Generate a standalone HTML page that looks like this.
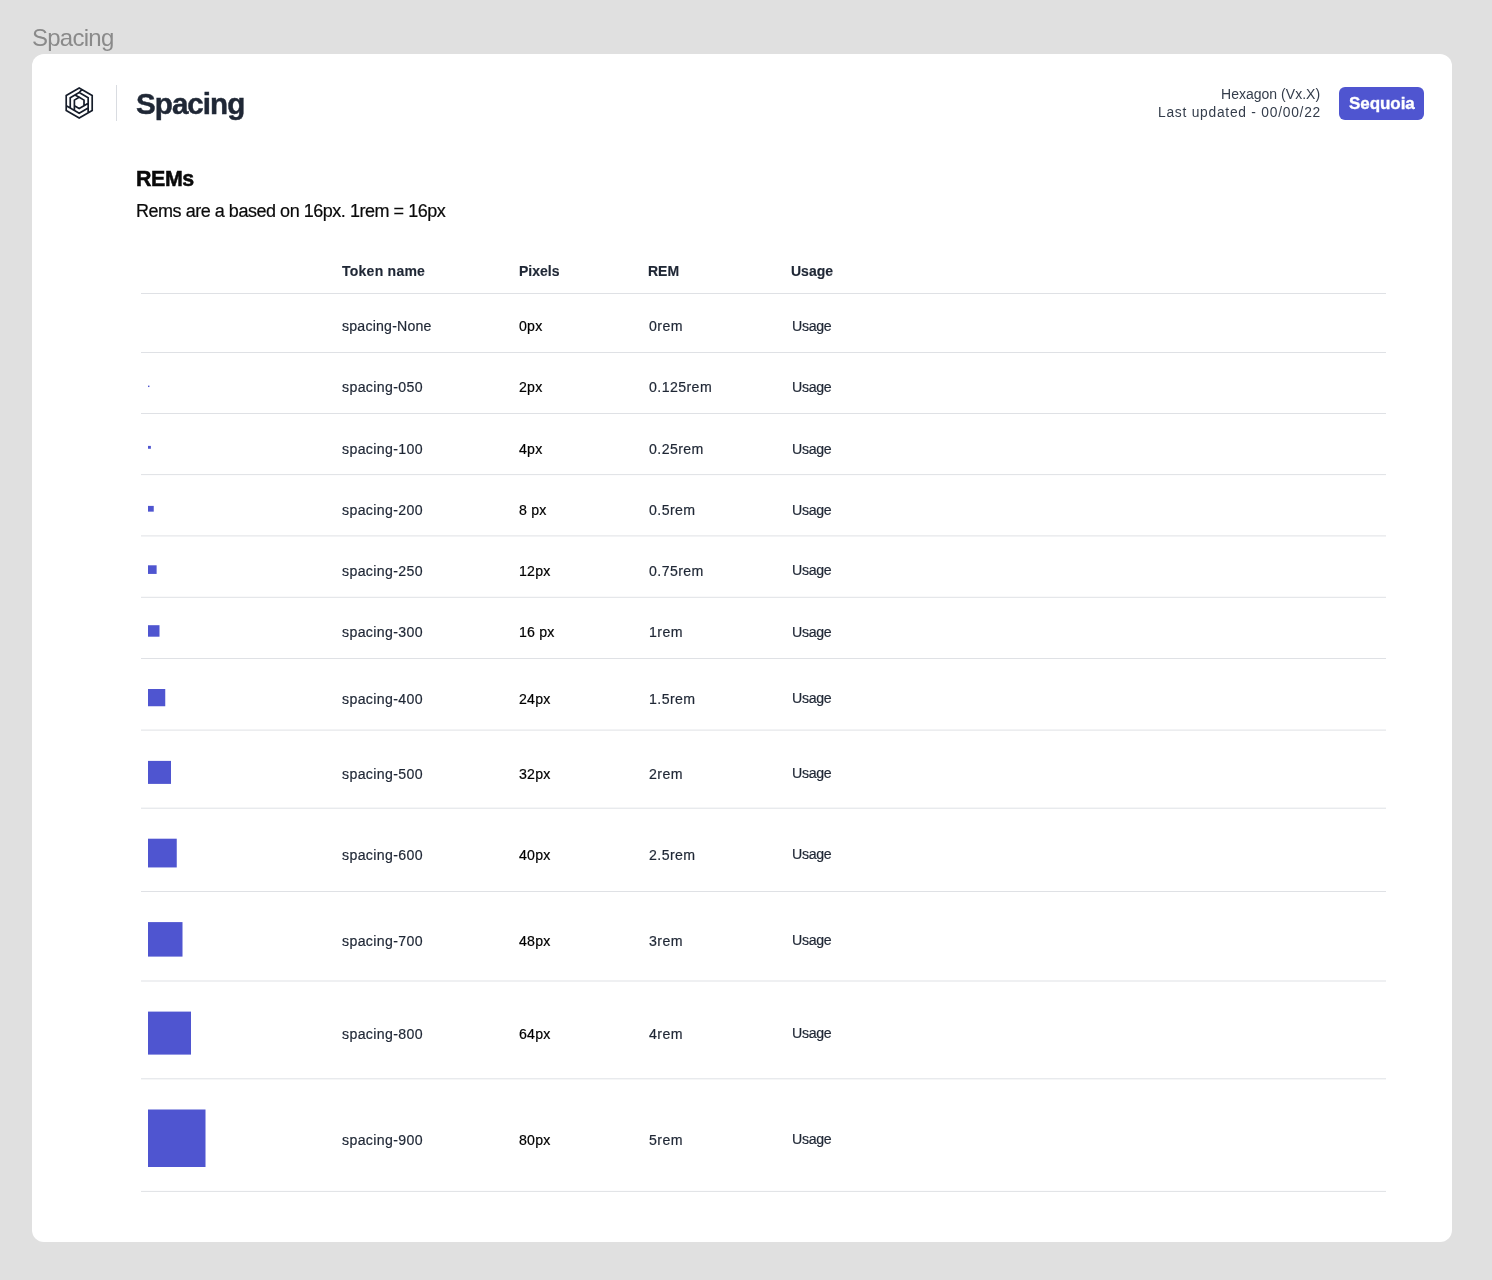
<!DOCTYPE html>
<html><head><meta charset="utf-8"><title>Spacing</title>
<style>
html,body{margin:0;padding:0;}
body{width:1492px;height:1280px;background:#e0e0e0;position:relative;overflow:hidden;font-family:"Liberation Sans",sans-serif;}
.t{position:absolute;white-space:nowrap;will-change:transform;}
.r{-webkit-text-stroke:0.2px currentColor;}
.card{position:absolute;left:32px;top:54px;width:1420px;height:1188px;background:#fff;border-radius:12px;}
svg{position:absolute;left:0;top:0;}
</style></head><body>
<div class="t " style="left:32.00px;top:25.98px;font-size:24px;line-height:24px;color:#8a8a8a;letter-spacing:-0.75px;">Spacing</div>
<div class="card"></div>
<div class="t " style="left:135.80px;top:88.74px;font-size:29.6px;line-height:29.6px;color:#1f2735;letter-spacing:-0.97px;font-weight:700;-webkit-text-stroke:0.45px #1f2735;">Spacing</div>
<div class="t " style="right:172.00px;top:86.55px;font-size:14px;line-height:14px;color:#343d4b;letter-spacing:0.02px;">Hexagon (Vx.X)</div>
<div class="t " style="right:171.50px;top:105.92px;font-size:13.8px;line-height:13.8px;color:#343d4b;letter-spacing:0.75px;">Last updated - 00/00/22</div>
<div style="position:absolute;left:1339.3px;top:86.5px;width:84.5px;height:33.2px;border-radius:6px;background:#4f55d0"></div>
<div class="t " style="left:1349.00px;top:95.21px;font-size:17px;line-height:17px;color:#ffffff;letter-spacing:-0.05px;font-weight:700;-webkit-text-stroke:0.35px #ffffff;">Sequoia</div>
<div class="t " style="left:136.00px;top:169.08px;font-size:21.4px;line-height:21.4px;color:#0a0a0a;letter-spacing:-0.4px;font-weight:700;-webkit-text-stroke:0.5px #0a0a0a;">REMs</div>
<div class="t r" style="left:135.50px;top:201.66px;font-size:18px;line-height:18px;color:#0a0a0a;letter-spacing:-0.47px;">Rems are a based on 16px. 1rem = 16px</div>
<div class="t " style="left:342.00px;top:263.65px;font-size:14px;line-height:14px;color:#1f2735;letter-spacing:0.25px;font-weight:700;-webkit-text-stroke:0.15px #1f2735;">Token name</div>
<div class="t " style="left:518.50px;top:263.65px;font-size:14px;line-height:14px;color:#1f2735;letter-spacing:0px;font-weight:700;-webkit-text-stroke:0.15px #1f2735;">Pixels</div>
<div class="t " style="left:647.70px;top:263.65px;font-size:14px;line-height:14px;color:#1f2735;letter-spacing:0px;font-weight:700;-webkit-text-stroke:0.15px #1f2735;">REM</div>
<div class="t " style="left:790.70px;top:263.65px;font-size:14px;line-height:14px;color:#1f2735;letter-spacing:0px;font-weight:700;-webkit-text-stroke:0.15px #1f2735;">Usage</div>
<div class="t r" style="left:342.30px;top:318.72px;font-size:14.15px;line-height:14.15px;color:#1f2735;letter-spacing:0.2px;">spacing-None</div>
<div class="t r" style="left:518.80px;top:318.72px;font-size:14.15px;line-height:14.15px;color:#000000;letter-spacing:0.2px;">0px</div>
<div class="t r" style="left:648.50px;top:318.72px;font-size:14.15px;line-height:14.15px;color:#1f2735;letter-spacing:0.42px;">0rem</div>
<div class="t r" style="left:792.30px;top:318.72px;font-size:14.15px;line-height:14.15px;color:#1f2735;letter-spacing:-0.3px;">Usage</div>
<div class="t r" style="left:342.00px;top:380.32px;font-size:14.15px;line-height:14.15px;color:#1f2735;letter-spacing:0.35px;">spacing-050</div>
<div class="t r" style="left:518.80px;top:380.32px;font-size:14.15px;line-height:14.15px;color:#000000;letter-spacing:0.2px;">2px</div>
<div class="t r" style="left:648.50px;top:380.32px;font-size:14.15px;line-height:14.15px;color:#1f2735;letter-spacing:0.42px;">0.125rem</div>
<div class="t r" style="left:792.30px;top:380.32px;font-size:14.15px;line-height:14.15px;color:#1f2735;letter-spacing:-0.3px;">Usage</div>
<div class="t r" style="left:342.00px;top:441.52px;font-size:14.15px;line-height:14.15px;color:#1f2735;letter-spacing:0.35px;">spacing-100</div>
<div class="t r" style="left:518.80px;top:441.52px;font-size:14.15px;line-height:14.15px;color:#000000;letter-spacing:0.2px;">4px</div>
<div class="t r" style="left:648.50px;top:441.52px;font-size:14.15px;line-height:14.15px;color:#1f2735;letter-spacing:0.42px;">0.25rem</div>
<div class="t r" style="left:792.30px;top:441.52px;font-size:14.15px;line-height:14.15px;color:#1f2735;letter-spacing:-0.3px;">Usage</div>
<div class="t r" style="left:342.00px;top:502.52px;font-size:14.15px;line-height:14.15px;color:#1f2735;letter-spacing:0.35px;">spacing-200</div>
<div class="t r" style="left:518.80px;top:502.52px;font-size:14.15px;line-height:14.15px;color:#000000;letter-spacing:0.2px;">8 px</div>
<div class="t r" style="left:648.50px;top:502.52px;font-size:14.15px;line-height:14.15px;color:#1f2735;letter-spacing:0.42px;">0.5rem</div>
<div class="t r" style="left:792.30px;top:502.52px;font-size:14.15px;line-height:14.15px;color:#1f2735;letter-spacing:-0.3px;">Usage</div>
<div class="t r" style="left:342.00px;top:563.52px;font-size:14.15px;line-height:14.15px;color:#1f2735;letter-spacing:0.35px;">spacing-250</div>
<div class="t r" style="left:518.80px;top:563.52px;font-size:14.15px;line-height:14.15px;color:#000000;letter-spacing:0.2px;">12px</div>
<div class="t r" style="left:648.50px;top:563.52px;font-size:14.15px;line-height:14.15px;color:#1f2735;letter-spacing:0.42px;">0.75rem</div>
<div class="t r" style="left:792.30px;top:562.82px;font-size:14.15px;line-height:14.15px;color:#1f2735;letter-spacing:-0.3px;">Usage</div>
<div class="t r" style="left:342.00px;top:624.77px;font-size:14.15px;line-height:14.15px;color:#1f2735;letter-spacing:0.35px;">spacing-300</div>
<div class="t r" style="left:518.80px;top:624.77px;font-size:14.15px;line-height:14.15px;color:#000000;letter-spacing:0.2px;">16 px</div>
<div class="t r" style="left:648.50px;top:624.77px;font-size:14.15px;line-height:14.15px;color:#1f2735;letter-spacing:0.42px;">1rem</div>
<div class="t r" style="left:792.30px;top:624.77px;font-size:14.15px;line-height:14.15px;color:#1f2735;letter-spacing:-0.3px;">Usage</div>
<div class="t r" style="left:342.00px;top:692.02px;font-size:14.15px;line-height:14.15px;color:#1f2735;letter-spacing:0.35px;">spacing-400</div>
<div class="t r" style="left:518.80px;top:692.02px;font-size:14.15px;line-height:14.15px;color:#000000;letter-spacing:0.2px;">24px</div>
<div class="t r" style="left:648.50px;top:692.02px;font-size:14.15px;line-height:14.15px;color:#1f2735;letter-spacing:0.42px;">1.5rem</div>
<div class="t r" style="left:792.30px;top:691.02px;font-size:14.15px;line-height:14.15px;color:#1f2735;letter-spacing:-0.3px;">Usage</div>
<div class="t r" style="left:342.00px;top:767.02px;font-size:14.15px;line-height:14.15px;color:#1f2735;letter-spacing:0.35px;">spacing-500</div>
<div class="t r" style="left:518.80px;top:767.02px;font-size:14.15px;line-height:14.15px;color:#000000;letter-spacing:0.2px;">32px</div>
<div class="t r" style="left:648.50px;top:767.02px;font-size:14.15px;line-height:14.15px;color:#1f2735;letter-spacing:0.42px;">2rem</div>
<div class="t r" style="left:792.30px;top:766.02px;font-size:14.15px;line-height:14.15px;color:#1f2735;letter-spacing:-0.3px;">Usage</div>
<div class="t r" style="left:342.00px;top:847.52px;font-size:14.15px;line-height:14.15px;color:#1f2735;letter-spacing:0.35px;">spacing-600</div>
<div class="t r" style="left:518.80px;top:847.52px;font-size:14.15px;line-height:14.15px;color:#000000;letter-spacing:0.2px;">40px</div>
<div class="t r" style="left:648.50px;top:847.52px;font-size:14.15px;line-height:14.15px;color:#1f2735;letter-spacing:0.42px;">2.5rem</div>
<div class="t r" style="left:792.30px;top:846.52px;font-size:14.15px;line-height:14.15px;color:#1f2735;letter-spacing:-0.3px;">Usage</div>
<div class="t r" style="left:342.00px;top:934.02px;font-size:14.15px;line-height:14.15px;color:#1f2735;letter-spacing:0.35px;">spacing-700</div>
<div class="t r" style="left:518.80px;top:934.02px;font-size:14.15px;line-height:14.15px;color:#000000;letter-spacing:0.2px;">48px</div>
<div class="t r" style="left:648.50px;top:934.02px;font-size:14.15px;line-height:14.15px;color:#1f2735;letter-spacing:0.42px;">3rem</div>
<div class="t r" style="left:792.30px;top:933.02px;font-size:14.15px;line-height:14.15px;color:#1f2735;letter-spacing:-0.3px;">Usage</div>
<div class="t r" style="left:342.00px;top:1027.27px;font-size:14.15px;line-height:14.15px;color:#1f2735;letter-spacing:0.35px;">spacing-800</div>
<div class="t r" style="left:518.80px;top:1027.27px;font-size:14.15px;line-height:14.15px;color:#000000;letter-spacing:0.2px;">64px</div>
<div class="t r" style="left:648.50px;top:1027.27px;font-size:14.15px;line-height:14.15px;color:#1f2735;letter-spacing:0.42px;">4rem</div>
<div class="t r" style="left:792.30px;top:1026.27px;font-size:14.15px;line-height:14.15px;color:#1f2735;letter-spacing:-0.3px;">Usage</div>
<div class="t r" style="left:342.00px;top:1132.52px;font-size:14.15px;line-height:14.15px;color:#1f2735;letter-spacing:0.35px;">spacing-900</div>
<div class="t r" style="left:518.80px;top:1132.52px;font-size:14.15px;line-height:14.15px;color:#000000;letter-spacing:0.2px;">80px</div>
<div class="t r" style="left:648.50px;top:1132.52px;font-size:14.15px;line-height:14.15px;color:#1f2735;letter-spacing:0.42px;">5rem</div>
<div class="t r" style="left:792.30px;top:1131.52px;font-size:14.15px;line-height:14.15px;color:#1f2735;letter-spacing:-0.3px;">Usage</div>
<svg width="1492" height="1280" viewBox="0 0 1492 1280">
<rect x="141" y="293.00" width="1245" height="1" fill="#dfe1e5"/>
<rect x="141" y="352.00" width="1245" height="1" fill="#dfe1e5"/>
<rect x="141" y="413.00" width="1245" height="1" fill="#dfe1e5"/>
<rect x="141" y="474.10" width="1245" height="1" fill="#dfe1e5"/>
<rect x="141" y="535.40" width="1245" height="1" fill="#dfe1e5"/>
<rect x="141" y="596.80" width="1245" height="1" fill="#dfe1e5"/>
<rect x="141" y="658.00" width="1245" height="1" fill="#dfe1e5"/>
<rect x="141" y="729.60" width="1245" height="1" fill="#dfe1e5"/>
<rect x="141" y="807.70" width="1245" height="1" fill="#dfe1e5"/>
<rect x="141" y="891.00" width="1245" height="1" fill="#dfe1e5"/>
<rect x="141" y="980.50" width="1245" height="1" fill="#dfe1e5"/>
<rect x="141" y="1078.30" width="1245" height="1" fill="#dfe1e5"/>
<rect x="141" y="1190.90" width="1245" height="1" fill="#dfe1e5"/>
<rect x="148" y="385.60" width="1.44" height="1.44" fill="#4f55d0"/>
<rect x="148" y="445.90" width="2.875" height="2.875" fill="#4f55d0"/>
<rect x="148" y="505.90" width="5.75" height="5.75" fill="#4f55d0"/>
<rect x="148" y="565.30" width="8.625" height="8.625" fill="#4f55d0"/>
<rect x="148" y="625.20" width="11.5" height="11.5" fill="#4f55d0"/>
<rect x="148" y="689.00" width="17.25" height="17.25" fill="#4f55d0"/>
<rect x="148" y="760.90" width="23" height="23" fill="#4f55d0"/>
<rect x="148" y="838.70" width="28.75" height="28.75" fill="#4f55d0"/>
<rect x="148" y="922.10" width="34.5" height="34.5" fill="#4f55d0"/>
<rect x="148" y="1011.60" width="43" height="43" fill="#4f55d0"/>
<rect x="148" y="1109.50" width="57.5" height="57.5" fill="#4f55d0"/>
<rect x="116" y="85" width="1" height="36" fill="#d9dce1"/>
<path d="M79.20,87.90 L92.19,95.40 L92.19,110.40 L79.20,117.90 L66.21,110.40 L66.21,95.40 Z M79.20,92.55 L88.16,97.73 L88.16,108.08 L79.20,113.25 L70.24,108.08 L70.24,97.73 Z M79.20,97.35 L84.01,100.12 L84.01,105.68 L79.20,108.45 L74.39,105.68 L74.39,100.12 Z M88.16,108.08 L88.16,112.73 M70.24,108.08 L66.21,105.75 M79.20,92.55 L81.80,89.60 M74.39,105.68 L74.39,110.47 M84.01,105.68 L88.16,103.28 M79.20,97.35 L75.04,94.95" fill="none" stroke="#161d2a" stroke-width="1.7" stroke-linejoin="miter"/>
</svg>
</body></html>
